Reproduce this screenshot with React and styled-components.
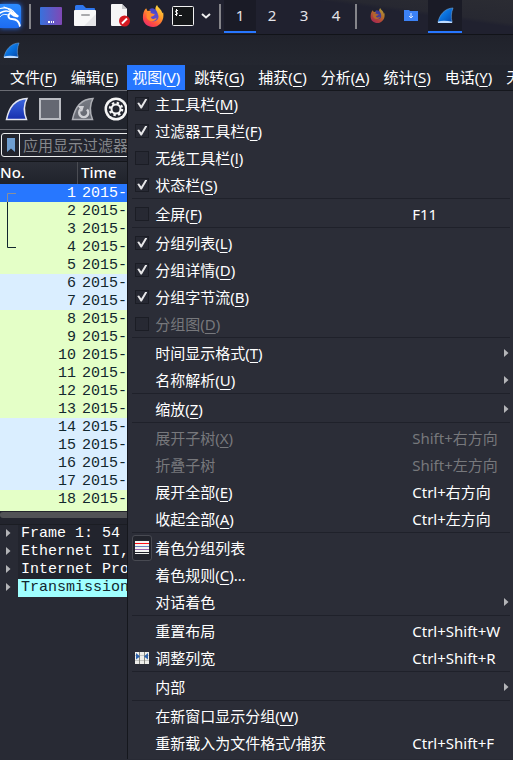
import React from "react";
import styled, { createGlobalStyle, css } from "styled-components";

const UI = `"Noto Sans", "Noto Sans CJK SC", sans-serif`;
const MONO = `"Liberation Mono", monospace`;

const GlobalStyle = createGlobalStyle`
  * { box-sizing: border-box; }
  body { margin: 0; background: #22242d; overflow: hidden; }
  button, input { font: inherit; color: inherit; margin: 0; padding: 0; border: 0; background: none; }
  svg { display: block; flex: none; }
`;

const Desktop = styled.div`
  display: flex;
  flex-direction: column;
  height: 100vh;
  overflow: hidden;
  color: #fff;
  font: 15px/20px ${UI};
  white-space: nowrap;
`;

/* ---------- Desktop panel ---------- */

const Panel = styled.header`
  display: flex;
  flex: none;
  height: 35px;
  background: linear-gradient(8deg, #20212f 0 74%, #272831 78%, #2b2c33 100%);
  border-bottom: 1px solid #111318;
`;

const PanelButton = styled.button`
  display: flex;
  align-items: center;
  justify-content: center;
  flex: none;
  width: ${(p) => p.$width || 34}px;
  height: 33px;
  border-bottom: 2px solid ${(p) => (p.$active ? "#2777ff" : "transparent")};
  background: ${(p) => (p.$active ? "#1a1b26" : "transparent")};
  opacity: ${(p) => (p.$faded ? 0.65 : 1)};
`;

const LogoButton = styled(PanelButton)`
  justify-content: flex-start;
`;

const LogoTile = styled.span`
  display: flex;
  width: 21px;
  height: 24px;
  border-radius: 0 4px 4px 0;
  background: linear-gradient(#2c8cff, #1d6cf2);
  box-shadow: 0 0 5px #2777ff;
  overflow: hidden;
`;

const WorkspaceButton = styled(PanelButton)`
  padding-bottom: 2px;
  color: #e3e3e8;
`;

const PanelDivider = styled.span`
  flex: none;
  width: 2px;
  height: 25px;
  margin: 4px 3px 0;
  background: #85858a;
`;

/* ---------- Window ---------- */

const TitleBar = styled.div`
  display: flex;
  align-items: center;
  flex: none;
  height: 30px;
  padding-left: 3px;
  background: linear-gradient(#20222b, #242730);
`;

const MenuBar = styled.nav`
  display: flex;
  flex: none;
  gap: 4px;
  height: 26px;
  padding-left: 5px;
  background: #22252e;
  border-bottom: 1px solid #6b6d74;
`;

const MenuSlot = styled.div`
  position: relative;
  flex: none;
`;

const MenuTitle = styled.button`
  display: block;
  height: 25px;
  padding: 0 5px 2px;
  background: ${(p) => (p.$open ? "#2777ff" : "transparent")};
`;

const Mnemonic = styled.span`
  text-decoration: underline;
  text-decoration-thickness: 1px;
  text-underline-offset: 3px;
`;

const ToolBar = styled.div`
  display: flex;
  align-items: center;
  flex: none;
  gap: 9px;
  height: 39px;
  padding: 0 5px 2px;
  background: #22252e;
  border-bottom: 1px solid #6b6d74;
`;

const ToolButton = styled.button`
  flex: none;
  width: 24px;
  height: 24px;
`;

const FilterBar = styled.form`
  display: flex;
  flex: none;
  height: 24px;
  margin: 3px 1px 4px;
  border: 1px solid #eceeef;
  border-radius: 3px;
`;

const BookmarkButton = styled.button`
  display: flex;
  align-items: center;
  justify-content: center;
  width: 18px;
  border-right: 1px solid #eceeef;
`;

const FilterInput = styled.input`
  flex: 1;
  min-width: 0;
  padding-left: 3px;
  outline: 0;
  &::placeholder { color: #86888c; opacity: 1; }
`;

/* ---------- Packet list ---------- */

const PacketPane = styled.section`
  position: relative;
  flex: none;
  height: 350px;
  overflow: hidden;
  background: #e4ffc7;
  border-top: 1px solid #14161b;
`;

const PacketTable = styled.table`
  width: 100%;
  table-layout: fixed;
  border-collapse: separate;
  border-spacing: 0;
`;

const HeadCell = styled.th`
  width: ${(p) => (p.$narrow ? "78px" : "auto")};
  height: 22px;
  padding: 0 0 2px ${(p) => (p.$narrow ? 0 : 3)}px;
  text-align: left;
  font-weight: 500;
  background: linear-gradient(#2b2e37, #20232b);
  border-right: 1px solid #4a4c53;
`;

const rowTone = {
  selected: css`background: #2777ff; color: #fff;`,
  green: css`background: #e4ffc7; color: #12272e;`,
  blue: css`background: #daeeff; color: #12272e;`,
};

const PacketRow = styled.tr`
  font: 15px/16px ${MONO};
  ${(p) => rowTone[p.$tone]}
`;

const PacketCell = styled.td`
  height: 18px;
  padding: 2px ${(p) => (p.$number ? 2 : 4)}px 0;
  text-align: ${(p) => (p.$number ? "right" : "left")};
`;

const ConversationMark = styled.svg`
  position: absolute;
  left: 7px;
  top: 31px;
`;

const Scrollbar = styled.div`
  flex: none;
  height: 7px;
  background: #525356;
  border-top: 1px solid #24262c;
  border-radius: 3px;
`;

/* ---------- Packet details ---------- */

const Details = styled.ul`
  flex: 1;
  margin: 6px 0 0;
  padding: 0;
  list-style: none;
  background: #282a34;
  border-top: 1px solid #1b1d23;
  font: 15px/18px ${MONO};
`;

const DetailRow = styled.li`
  display: flex;
  height: 18px;
`;

const Expander = styled.button`
  display: flex;
  align-items: center;
  flex: none;
  width: 18px;
  padding-left: 6px;
  padding-bottom: 2px;
`;

const DetailText = styled.span`
  flex: 1;
  padding-left: 3px;
  background: ${(p) => (p.$highlight ? "#a0ffff" : "#22242d")};
  color: ${(p) => (p.$highlight ? "#12272e" : "#fff")};
`;

/* ---------- Drop-down menu ---------- */

const Menu = styled.div`
  position: absolute;
  z-index: 2;
  top: 25px;
  left: 0;
  min-width: 386px;
  padding-bottom: 3px;
  background: #2b2d37;
  border-left: 1px solid #15171d;
  box-shadow: inset 0 1px #15171d;
`;

const MenuGroup = styled.div`
  & + & {
    margin: 0 3px 0 4px;
    padding-top: 1px;
    border-top: 1px solid #1f212a;
  }
  & + & > * {
    margin: 0 -3px 0 -4px;
  }
`;

const menuRow = css`
  display: grid;
  grid-template-columns: 27px 257px 1fr 9px;
  align-items: center;
  height: 27px;
  text-align: left;
  color: ${(p) => (p.$disabled ? "#77787c" : "#fff")};
`;

const MenuCheckRow = styled.label`
  ${menuRow}
`;

const MenuButton = styled.button`
  ${menuRow}
  && { width: 385px; }
`;

const CheckBox = styled.input`
  appearance: none;
  width: 14px;
  height: 14px;
  margin-left: 7px;
  background: #272933;
  border: 1px solid #1b1d25;
  &:checked::after {
    content: "";
    display: block;
    width: 10px;
    height: 10px;
    margin: 1px;
    background: #e6e6e8;
    clip-path: polygon(0 45%, 18% 40%, 40% 70%, 82% 0, 100% 8%, 46% 100%, 34% 100%);
  }
`;

const IconSlot = styled.span`
  display: flex;
  margin-left: ${(p) => (p.$framed ? 4 : 7)}px;
  width: ${(p) => (p.$framed ? 20 : 14)}px;
  height: ${(p) => (p.$framed ? 26 : 14)}px;
  align-items: center;
  justify-content: center;
  border: ${(p) => (p.$framed ? "1px solid #484a52" : "0")};
  border-radius: 3px;
  background: ${(p) => (p.$framed ? "#22242c" : "transparent")};
`;

/* ---------- Icons ---------- */

function Fin({ size = 24, id, from, to, edge, children }) {
  return (
    <svg width={size} height={size} viewBox="0 0 24 24">
      <defs>
        <linearGradient id={id} x1="0" y1="0" x2="0" y2="1">
          <stop offset="0" stopColor={from} />
          <stop offset="1" stopColor={to} />
        </linearGradient>
      </defs>
      <path d="M1.5 22.5C4 10 10 2 22 1.5C18.5 8 18.5 15 21.5 22.5Z" fill={`url(#${id})`} stroke={edge} strokeWidth="1.5" />
      {children}
    </svg>
  );
}

function WiresharkLogo({ size, id }) {
  return (
    <svg width={size} height={size} viewBox="0 0 18 18">
      <defs>
        <linearGradient id={id} x1="0" y1="0" x2="1" y2="1">
          <stop offset="0" stopColor="#2c92f5" />
          <stop offset=".5" stopColor="#0870dc" />
          <stop offset="1" stopColor="#0646a8" />
        </linearGradient>
      </defs>
      <path d="M1 16C3 8 8 1.5 17 1C15 6 14.5 11 16 16Z" fill={`url(#${id})`} stroke="#73a8dd" strokeWidth=".6" />
      <path d="M1 15.500C5 14 11 14.500 16 15.500L16 17H1Z" fill="#bfdcff" />
    </svg>
  );
}

function FirefoxIcon({ size, id }) {
  return (
    <svg width={size} height={size} viewBox="0 0 24 24">
      <defs>
        <linearGradient id={id} x1=".8" y1="0" x2=".2" y2="1">
          <stop offset="0" stopColor="#ffdf45" />
          <stop offset=".4" stopColor="#ff9a29" />
          <stop offset=".75" stopColor="#ff4b43" />
          <stop offset="1" stopColor="#e52b72" />
        </linearGradient>
      </defs>
      <path
        d="M1 14C1 9 2 6 4.500 3.500L6 6.500L9.500 6L11 8L15 7C14 4 15 1.500 16.500 0C17 3 22 5 22 9L23 8C25 17 19 24 12 24C6 24 1 20 1 14Z"
        fill={`url(#${id})`}
      />
      <circle cx="12.500" cy="12.500" r="5.500" fill="#5b4ccf" />
      <path d="M8 5C10 3 12 3 14 4.500C16 6 17 8 17 10C14 8 12 8 10 8Z" fill="#4a49c9" />
      <path d="M5 9C8 7 10 10 14 10C13.500 12 11 12 9.500 13C10.500 15.500 13 16 16 14C15 19 7 19 5 14Z" fill="#ff8b2e" />
    </svg>
  );
}

const DragonIcon = () => (
  <svg width="21" height="24" viewBox="0 0 21 24">
    <g fill="none" stroke="#fff" strokeLinecap="round">
      <path d="M0 4.500C6 3 12 5 15.500 10" strokeWidth="1.200" />
      <path d="M0 9C4 6.500 8 6.500 11 8.500" strokeWidth="1.500" />
      <path d="M4 3C8 4 10 6 12 8" strokeWidth="1.200" />
      <path d="M11 8.500C7 11 8 15 12 15C16 15 19 17 20 22" strokeWidth="2" />
      <path d="M0 13C2 10 5 10 8 11" strokeWidth="1" />
    </g>
    <path d="M10 7.500L15 8.500L19 12L17.500 13.500L13.500 12.500L10 10Z" fill="#fff" />
  </svg>
);

const DesktopIcon = () => (
  <svg width="22" height="18" viewBox="0 0 22 18">
    <defs>
      <linearGradient id="desk" x1="0" y1="0" x2="1" y2="0">
        <stop offset="0" stopColor="#3871dc" />
        <stop offset="1" stopColor="#8048b5" />
      </linearGradient>
    </defs>
    <rect width="22" height="18" rx="1" fill="url(#desk)" />
    <path d="M8 14h2v2H8zM11 14h1v2h-1zM13 14h1v2h-1z" fill="#fff" />
  </svg>
);

const FolderIcon = () => (
  <svg width="22" height="21" viewBox="0 0 22 21">
    <path d="M1 6V1.500Q1 0 2.500 0H9L12 3H20Q21 3 21 4V6Z" fill="#2e76ed" />
    <rect y="5" width="22" height="16" rx="1" fill="#f8f8f9" />
    <path d="M22 9V20L21 21H10Z" fill="#e6e6e9" />
    <rect x="7" y="9" width="9" height="2" rx="1" fill="#a9aaad" />
  </svg>
);

const DocumentIcon = () => (
  <svg width="22" height="23" viewBox="0 0 22 23">
    <path d="M3 1Q3 0 4 0H14L19 5V22H4Q3 22 3 21Z" fill="#f5f5f6" />
    <path d="M14 0L19 5H14Z" fill="#c5c6c9" />
    <circle cx="16.500" cy="17" r="5.500" fill="#d61921" />
    <path d="M14 19.500L19 14.500" stroke="#fff" strokeWidth="2" />
  </svg>
);

const TerminalIcon = () => (
  <svg width="22" height="20" viewBox="0 0 22 20">
    <rect x=".5" y=".5" width="21" height="19" rx="1" fill="#151719" stroke="#f2f2f2" />
    <path d="M6 4.500H4Q3 5.500 4 6.500H5Q6 7.500 5 8.500H3M4.500 3V10M7 9.500H10" fill="none" stroke="#fff" />
  </svg>
);

const DownloadsIcon = () => (
  <svg width="14" height="11" viewBox="0 0 14 11">
    <path d="M0 0H5L6 1H14V11H0Z" fill="#3c82f6" />
    <path d="M7 3V8M5 6L7 8L9 6" fill="none" stroke="#d7e6ff" />
  </svg>
);

const Arrow = () => (
  <svg width="5" height="8" viewBox="0 0 5 8">
    <path d="M0 0L4.500 4L0 8Z" fill="#b4b5b8" />
  </svg>
);

const ColorizeIcon = () => (
  <svg width="14" height="13" viewBox="0 0 14 13">
    <rect width="14" height="13" fill="#f4f4f1" />
    <rect y="2" width="14" height="1" fill="#ff1018" />
    <rect y="5" width="14" height="1" fill="#6b84c0" />
    <rect y="8" width="14" height="1" fill="#9a66b0" />
    <rect y="11" width="14" height="1" fill="#22242c" />
  </svg>
);

const ResizeIcon = () => (
  <svg width="14" height="12" viewBox="0 0 14 12">
    <rect width="14" height="12" fill="#eeeeea" />
    <path d="M0 3.500H14M0 8.500H14" stroke="#c5c6c3" />
    <path d="M4.500 0V12M9.500 0V12" stroke="#85867f" />
    <path d="M1 1L5 4.500L1 7.500ZM13 1L9 4.500L13 7.500Z" fill="#2d62ac" />
  </svg>
);

/* ---------- Data ---------- */

const menuTitles = [
  ["文件", "F"], ["编辑", "E"], ["视图", "V"], ["跳转", "G"], ["捕获", "C"],
  ["分析", "A"], ["统计", "S"], ["电话", "Y"], ["无线", "W"],
];

const viewMenu = [
  [
    { label: "主工具栏", hotkey: "M", checked: true },
    { label: "过滤器工具栏", hotkey: "F", checked: true },
    { label: "无线工具栏", hotkey: "l", checked: false },
    { label: "状态栏", hotkey: "S", checked: true },
  ],
  [{ label: "全屏", hotkey: "F", checked: false, shortcut: "F11" }],
  [
    { label: "分组列表", hotkey: "L", checked: true },
    { label: "分组详情", hotkey: "D", checked: true },
    { label: "分组字节流", hotkey: "B", checked: true },
    { label: "分组图", hotkey: "D", checked: false, disabled: true },
  ],
  [
    { label: "时间显示格式", hotkey: "T", submenu: true },
    { label: "名称解析", hotkey: "U", submenu: true },
  ],
  [{ label: "缩放", hotkey: "Z", submenu: true }],
  [
    { label: "展开子树", hotkey: "X", shortcut: "Shift+右方向", disabled: true },
    { label: "折叠子树", shortcut: "Shift+左方向", disabled: true },
    { label: "展开全部", hotkey: "E", shortcut: "Ctrl+右方向" },
    { label: "收起全部", hotkey: "A", shortcut: "Ctrl+左方向" },
  ],
  [
    { label: "着色分组列表", icon: <ColorizeIcon />, framed: true },
    { label: "着色规则", hotkey: "C", tail: "…" },
    { label: "对话着色", submenu: true },
  ],
  [
    { label: "重置布局", shortcut: "Ctrl+Shift+W" },
    { label: "调整列宽", shortcut: "Ctrl+Shift+R", icon: <ResizeIcon /> },
  ],
  [{ label: "内部", submenu: true }],
  [
    { label: "在新窗口显示分组", hotkey: "W" },
    { label: "重新载入为文件格式/捕获", shortcut: "Ctrl+Shift+F" },
  ],
];

const blueRows = [6, 7, 14, 15, 16, 17];
const packets = Array.from({ length: 18 }, (_, i) => {
  const no = i + 1;
  return { no, tone: no === 1 ? "selected" : blueRows.includes(no) ? "blue" : "green" };
});

const details = ["Frame 1: 54 ", "Ethernet II,", "Internet Pro", "Transmission"];

/* ---------- Parts ---------- */

function Caption({ label, hotkey, tail }) {
  return (
    <span>
      {label}
      {hotkey && <>(<Mnemonic>{hotkey}</Mnemonic>)</>}
      {tail}
    </span>
  );
}

function MenuEntry({ item }) {
  const rest = (
    <>
      <Caption {...item} />
      <span>{item.shortcut}</span>
      {item.submenu ? <Arrow /> : <span />}
    </>
  );
  if (item.checked !== undefined) {
    return (
      <MenuCheckRow $disabled={item.disabled}>
        <CheckBox type="checkbox" defaultChecked={item.checked} disabled={item.disabled} />
        {rest}
      </MenuCheckRow>
    );
  }
  return (
    <MenuButton type="button" $disabled={item.disabled} disabled={item.disabled}>
      <IconSlot $framed={item.framed}>{item.icon}</IconSlot>
      {rest}
    </MenuButton>
  );
}

function ViewMenu() {
  return (
    <Menu>
      {viewMenu.map((group, g) => (
        <MenuGroup key={g}>
          {group.map((item) => (
            <MenuEntry key={item.label} item={item} />
          ))}
        </MenuGroup>
      ))}
    </Menu>
  );
}

function DesktopPanel() {
  return (
    <Panel>
      <LogoButton $width={26} aria-label="Kali">
        <LogoTile><DragonIcon /></LogoTile>
      </LogoButton>
      <PanelDivider />
      <PanelButton aria-label="Desktop"><DesktopIcon /></PanelButton>
      <PanelButton aria-label="Files"><FolderIcon /></PanelButton>
      <PanelButton aria-label="Editor"><DocumentIcon /></PanelButton>
      <PanelButton aria-label="Firefox"><FirefoxIcon size={22} id="ff-launch" /></PanelButton>
      <PanelButton $width={26} aria-label="Terminal"><TerminalIcon /></PanelButton>
      <PanelButton $width={20} aria-label="More terminals">
        <svg width="10" height="6" viewBox="0 0 10 6">
          <path d="M1 1L5 4.500L9 1" fill="none" stroke="#eee" strokeWidth="2" />
        </svg>
      </PanelButton>
      <PanelDivider />
      {[1, 2, 3, 4].map((n) => (
        <WorkspaceButton key={n} $width={32} $active={n === 1}>{n}</WorkspaceButton>
      ))}
      <PanelDivider />
      <PanelButton $faded aria-label="Firefox window"><FirefoxIcon size={15} id="ff-task" /></PanelButton>
      <PanelButton aria-label="Downloads"><DownloadsIcon /></PanelButton>
      <PanelButton $active aria-label="Wireshark"><WiresharkLogo size={17} id="ws-task" /></PanelButton>
    </Panel>
  );
}

export default function App() {
  return (
    <Desktop>
      <GlobalStyle />
      <DesktopPanel />
      <TitleBar><WiresharkLogo size={17} id="ws-title" /></TitleBar>
      <MenuBar>
        {menuTitles.map(([label, hotkey]) => (
          <MenuSlot key={label}>
            <MenuTitle $open={hotkey === "V"}><Caption label={label} hotkey={hotkey} /></MenuTitle>
            {hotkey === "V" && <ViewMenu />}
          </MenuSlot>
        ))}
      </MenuBar>
      <ToolBar>
        <ToolButton aria-label="开始"><Fin id="fin-start" from="#3b67df" to="#172fae" edge="#e4e6ef" /></ToolButton>
        <ToolButton aria-label="停止">
          <svg width="24" height="24" viewBox="0 0 24 24">
            <rect x="2" y="2" width="20" height="20" fill="#656872" stroke="#b9bbc1" strokeWidth="2" />
          </svg>
        </ToolButton>
        <ToolButton aria-label="重新开始">
          <Fin id="fin-restart" from="#777b83" to="#646770" edge="#aeb0b6">
            <path d="M16 12.500A4.500 4.500 0 1 1 9.500 12.500" fill="none" stroke="#d0d1d5" strokeWidth="2.500" />
            <path d="M7 9L13 9L11 15Z" fill="#d0d1d5" />
          </Fin>
        </ToolButton>
        <ToolButton aria-label="捕获选项">
          <svg width="24" height="24" viewBox="0 0 24 24">
            <circle cx="12" cy="12" r="11.500" fill="#f5f5f5" />
            <circle cx="12" cy="12" r="9" fill="#22252e" />
            <circle cx="12" cy="12" r="6" fill="none" stroke="#f5f5f5" strokeWidth="2.500" strokeDasharray="2.350 2.350" />
            <circle cx="12" cy="12" r="4.500" fill="none" stroke="#f5f5f5" strokeWidth="2" />
          </svg>
        </ToolButton>
      </ToolBar>
      <FilterBar>
        <BookmarkButton type="button" aria-label="书签">
          <svg width="8" height="14" viewBox="0 0 8 14">
            <path d="M0 0H8V14L4 10.500L0 14Z" fill="#6f9ed0" />
          </svg>
        </BookmarkButton>
        <FilterInput aria-label="显示过滤器" placeholder="应用显示过滤器" />
      </FilterBar>
      <PacketPane>
        <PacketTable>
          <thead>
            <tr>
              <HeadCell $narrow>No.</HeadCell>
              <HeadCell>Time</HeadCell>
            </tr>
          </thead>
          <tbody>
            {packets.map(({ no, tone }) => (
              <PacketRow key={no} $tone={tone}>
                <PacketCell $number>{no}</PacketCell>
                <PacketCell>2015-</PacketCell>
              </PacketRow>
            ))}
          </tbody>
        </PacketTable>
        <ConversationMark width="10" height="56" viewBox="0 0 10 56">
          <path d="M9 .5H.5V9" fill="none" stroke="#8b8f98" />
          <path d="M.5 9V54.500H9" fill="none" stroke="#12272e" />
        </ConversationMark>
      </PacketPane>
      <Scrollbar />
      <Details>
        {details.map((text, i) => (
          <DetailRow key={text}>
            <Expander aria-label="展开"><Arrow /></Expander>
            <DetailText $highlight={i === 3}>{text}</DetailText>
          </DetailRow>
        ))}
      </Details>
    </Desktop>
  );
}
